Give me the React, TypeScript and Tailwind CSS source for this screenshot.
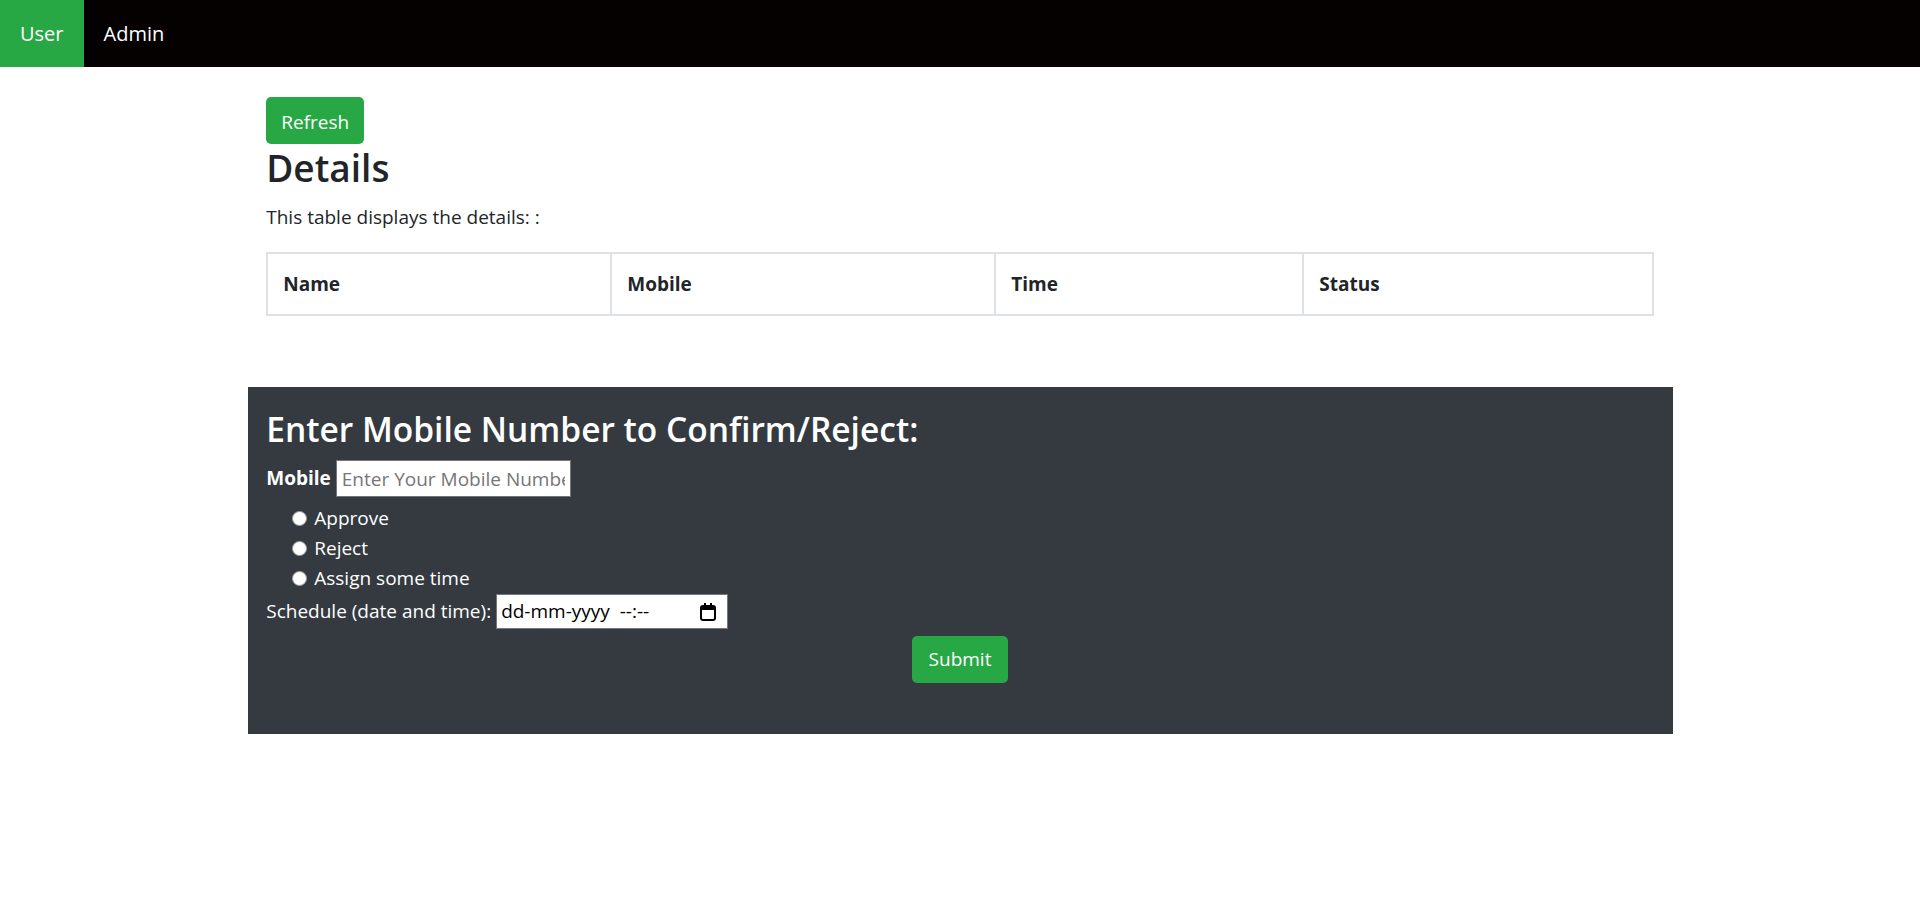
import React from 'react';

const font = "font-['Open_Sans','Noto_Sans',sans-serif]";

const CalendarGlyph: React.FC = () => (
  <svg width="18" height="20" viewBox="0 0 18 20" fill="none">
    <rect x="2" y="4" width="14" height="14" rx="2" stroke="#000" strokeWidth="2" />
    <rect x="2" y="4" width="14" height="4" fill="#000" />
    <rect x="5" y="1" width="2" height="4" fill="#000" />
    <rect x="11" y="1" width="2" height="4" fill="#000" />
  </svg>
);

const App: React.FC = () => {
  const columns = [
    { label: 'Name', w: 'w-[344px]' },
    { label: 'Mobile', w: 'w-[384px]' },
    { label: 'Time', w: 'w-[308px]' },
    { label: 'Status', w: '' },
  ];

  const options = ['Approve', 'Reject', 'Assign some time'];

  return (
    <div className={`min-h-[901px] bg-white text-[#212529] ${font}`}>
      <nav className="h-[67px] bg-[#060101] flex">
        <a className="flex items-center px-5 bg-[#28a745] text-white text-[20px]">User</a>
        <a className="flex items-center px-5 text-white text-[20px]">Admin</a>
      </nav>

      <div className="w-[1425px] mx-auto px-[18.75px] pt-[30px]">
        <button className="h-[47px] px-[15px] pt-[3px] rounded-[5px] bg-[#28a745] text-white text-[19px]">
          Refresh
        </button>
        <h2 className="text-[37px] font-semibold leading-[48px] mb-[10px]">Details</h2>
        <p className="text-[19px] leading-[30px] mb-[20px]">This table displays the details: :</p>
        <table className="w-full border-collapse border-2 border-[#dee2e6]">
          <thead>
            <tr>
              {columns.map((c) => (
                <th
                  key={c.label}
                  className={`${c.w} h-[62px] border-2 border-[#dee2e6] px-[15px] text-left text-[19px] font-bold`}
                >
                  {c.label}
                </th>
              ))}
            </tr>
          </thead>
        </table>
      </div>

      <div className="w-[1425px] mx-auto mt-[71px] h-[347px] bg-[#343a40] px-[18.75px] pt-[21px] text-white">
        <h3 className="text-[33.5px] font-semibold leading-[42px] mb-[10px]">
          Enter Mobile Number to Confirm/Reject:
        </h3>
        <div className="flex items-center gap-[5px]">
          <label className="text-[19px] font-bold">Mobile</label>
          <input
            placeholder="Enter Your Mobile Number"
            className="w-[235px] h-[37px] bg-white border border-[#767676] px-[5px] text-[19px] text-black placeholder:text-[#767676] outline-none"
          />
        </div>
        <ul className="pl-[26px] mt-[6px]">
          {options.map((o) => (
            <li key={o} className="flex items-center h-[30px] text-[19px]">
              <span className="w-[15px] h-[15px] rounded-full bg-white border border-[#9a9a9a] mr-[7px]" />
              {o}
            </li>
          ))}
        </ul>
        <div className="flex items-center gap-[5px] mt-[1px]">
          <span className="text-[19px]">Schedule (date and time):</span>
          <div className="w-[232px] h-[35px] bg-white border border-[#767676] flex items-center justify-between pl-[4px] pr-[10px] text-black text-[19px]">
            <span>dd-mm-yyyy&nbsp;&nbsp;--:--</span>
            <CalendarGlyph />
          </div>
        </div>
        <div className="flex justify-center mt-[7px]">
          <button className="h-[47px] w-[96px] rounded-[5px] bg-[#28a745] text-white text-[19px]">
            Submit
          </button>
        </div>
      </div>
    </div>
  );
};

export default App;
